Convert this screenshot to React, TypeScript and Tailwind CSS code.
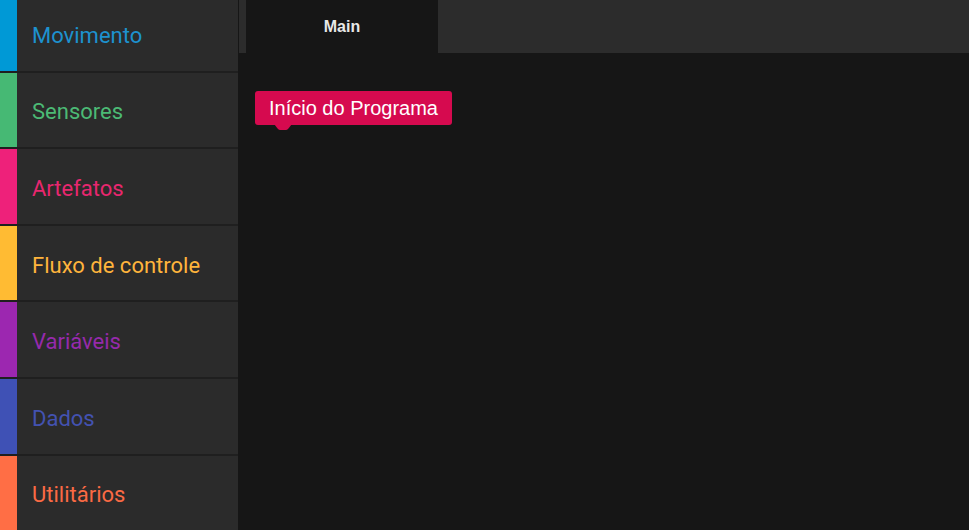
const categories = [
  { label: "Movimento", bar: "bg-[#0099d6]", text: "text-[#1d92cf]" },
  { label: "Sensores", bar: "bg-[#46b974]", text: "text-[#4cba75]" },
  { label: "Artefatos", bar: "bg-[#ee217a]", text: "text-[#e8276f]" },
  { label: "Fluxo de controle", bar: "bg-[#ffbb33]", text: "text-[#ffb43c]" },
  { label: "Variáveis", bar: "bg-[#9c27b0]", text: "text-[#962aac]" },
  { label: "Dados", bar: "bg-[#3f51b5]", text: "text-[#4352b1]" },
  { label: "Utilitários", bar: "bg-[#ff6e45]", text: "text-[#fb6a44]" },
];

function CategoryRow({ label, bar, text }: { label: string; bar: string; text: string }) {
  return (
    <div className="flex h-[76.6px] shrink-0 border-b-2 border-[#1f1f1f]">
      <div className={`w-[17px] shrink-0 ${bar}`} />
      <div className={`flex flex-1 items-center pl-[15px] pt-[4px] text-[22px] ${text}`}>{label}</div>
    </div>
  );
}

export default function App() {
  return (
    <div
      className="flex h-[530px] w-[969px] overflow-hidden bg-[#161616]"
      style={{ fontFamily: "Roboto, 'Liberation Sans', sans-serif" }}
    >
      <div className="-mt-[4px] flex w-[238px] shrink-0 flex-col bg-[#2b2b2b]">
        {categories.map((c) => (
          <CategoryRow key={c.label} {...c} />
        ))}
      </div>

      <div className="flex flex-1 flex-col pl-px">
        <div className="flex h-[53px] shrink-0 bg-[#2c2c2c] pl-[7px]">
          <div className="flex w-[192px] items-center justify-center bg-[#161616] font-['Liberation_Sans',sans-serif] text-[16px] font-bold text-[#e8e8e8]">
            Main
          </div>
        </div>

        <div className="flex-1 pl-[16px] pt-[38px]">
          <div className="relative inline-flex h-[34px] items-center rounded-[3px] bg-[#d60a4f] px-[14px] font-['Liberation_Sans',sans-serif] text-[20px] text-white">
            Início do Programa
            <svg
              className="absolute left-[19px] top-[33px]"
              width="18"
              height="6"
              viewBox="0 0 18 6"
            >
              <path d="M0 0 L4 5 Q5 6 6 6 L12 6 Q13 6 14 5 L18 0 Z" fill="#d60a4f" />
            </svg>
          </div>
        </div>
      </div>
    </div>
  );
}
